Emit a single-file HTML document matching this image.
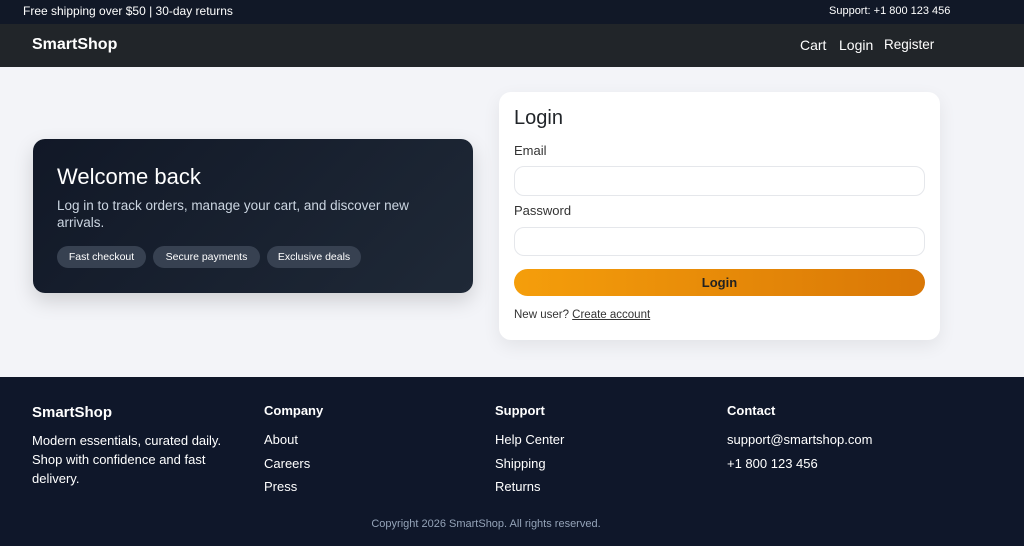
<!DOCTYPE html>
<html><head><style>
*{margin:0;padding:0;box-sizing:border-box}
body{width:1024px;height:552px;position:relative;background:#fff;font-family:"Liberation Sans",sans-serif;overflow:hidden}
.a{position:absolute;white-space:nowrap}
</style></head><body>
<div class="a" style="left:0;top:0;width:1024px;height:24px;background:#111827"></div>
<div class="a" style="left:23px;top:4px;font-size:12px;color:#fff">Free shipping over $50 | 30-day returns</div>
<div class="a" style="left:829px;top:5px;font-size:11px;color:#fff">Support: +1 800 123 456</div>
<div class="a" style="left:0;top:24px;width:1024px;height:43px;background:#212529"></div>
<div class="a" style="left:32px;top:36px;font-size:16px;font-weight:bold;color:#fff">SmartShop</div>
<div class="a" style="left:800px;top:37px;font-size:14px;color:#fff">Cart</div>
<div class="a" style="left:839px;top:37px;font-size:14px;color:#fff">Login</div>
<div class="a" style="left:884px;top:37px;font-size:13.5px;color:#fff">Register</div>
<div class="a" style="left:0;top:67px;width:1024px;height:310px;background:#f3f4f8"></div>
<div class="a" style="left:33px;top:139px;width:440px;height:154px;border-radius:12px;background:linear-gradient(135deg,#111827,#1f2937);box-shadow:0 8px 20px rgba(0,0,0,.15)"></div>
<div class="a" style="left:57px;top:164px;font-size:22px;color:#fff">Welcome back</div>
<div class="a" style="left:57px;top:197px;font-size:13.5px;line-height:17px;color:#cbd5e1;white-space:normal;width:390px">Log in to track orders, manage your cart, and discover new arrivals.</div>
<div class="a" style="left:57px;top:246px;width:89px;height:22px;border-radius:11px;background:#374151;color:#fff;font-size:10.5px;text-align:center;line-height:22px">Fast checkout</div>
<div class="a" style="left:153px;top:246px;width:107px;height:22px;border-radius:11px;background:#374151;color:#fff;font-size:10.5px;text-align:center;line-height:22px">Secure payments</div>
<div class="a" style="left:267px;top:246px;width:94px;height:22px;border-radius:11px;background:#374151;color:#fff;font-size:10.5px;text-align:center;line-height:22px">Exclusive deals</div>
<div class="a" style="left:499px;top:92px;width:441px;height:248px;border-radius:12px;background:#fff;box-shadow:0 6px 18px rgba(0,0,0,.07)"></div>
<div class="a" style="left:514px;top:107px;font-size:20px;color:#212529">Login</div>
<div class="a" style="left:514px;top:143px;font-size:13px;color:#333">Email</div>
<div class="a" style="left:514px;top:166px;width:411px;height:30px;border:1px solid #e5e7eb;border-radius:10px"></div>
<div class="a" style="left:514px;top:203px;font-size:13px;color:#333">Password</div>
<div class="a" style="left:514px;top:227px;width:411px;height:29px;border:1px solid #e5e7eb;border-radius:10px"></div>
<div class="a" style="left:514px;top:269px;width:411px;height:27px;border-radius:14px;background:linear-gradient(90deg,#f59e0b,#d97706);font-size:13px;font-weight:bold;color:#222;text-align:center;line-height:27px">Login</div>
<div class="a" style="left:514px;top:309px;font-size:11.5px;color:#333">New user? <u>Create account</u></div>
<div class="a" style="left:0;top:377px;width:1024px;height:169px;background:#0f172a"></div>
<div class="a" style="left:32px;top:404px;font-size:15px;font-weight:bold;color:#fff">SmartShop</div>
<div class="a" style="left:32px;top:431px;font-size:13px;line-height:19px;color:#fff;white-space:normal;width:215px">Modern essentials, curated daily. Shop with confidence and fast delivery.</div>
<div class="a" style="left:264px;top:403px;font-size:13px;font-weight:bold;color:#fff">Company</div>
<div class="a" style="left:264px;top:428px;font-size:13px;line-height:23.5px;color:#fff">About<br>Careers<br>Press</div>
<div class="a" style="left:495px;top:403px;font-size:13px;font-weight:bold;color:#fff">Support</div>
<div class="a" style="left:495px;top:428px;font-size:13px;line-height:23.5px;color:#fff">Help Center<br>Shipping<br>Returns</div>
<div class="a" style="left:727px;top:403px;font-size:13px;font-weight:bold;color:#fff">Contact</div>
<div class="a" style="left:727px;top:428px;font-size:13px;line-height:23.5px;color:#fff">support@smartshop.com<br>+1 800 123 456</div>
<div class="a" style="left:0;top:518px;width:972px;text-align:center;font-size:11px;color:#94a3b8">Copyright 2026 SmartShop. All rights reserved.</div>
</body></html>
